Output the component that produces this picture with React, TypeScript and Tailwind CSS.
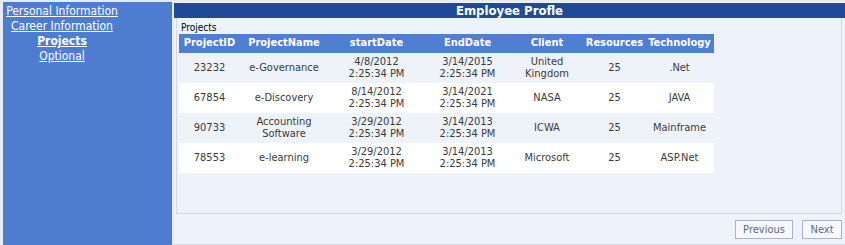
import React from "react";

const rows = [
  { id: "23232", name: ["e-Governance"], start: ["4/8/2012", "2:25:34 PM"], end: ["3/14/2015", "2:25:34 PM"], client: ["United", "Kingdom"], res: "25", tech: ".Net" },
  { id: "67854", name: ["e-Discovery"], start: ["8/14/2012", "2:25:34 PM"], end: ["3/14/2021", "2:25:34 PM"], client: ["NASA"], res: "25", tech: "JAVA" },
  { id: "90733", name: ["Accounting", "Software"], start: ["3/29/2012", "2:25:34 PM"], end: ["3/14/2013", "2:25:34 PM"], client: ["ICWA"], res: "25", tech: "Mainframe" },
  { id: "78553", name: ["e-learning"], start: ["3/29/2012", "2:25:34 PM"], end: ["3/14/2013", "2:25:34 PM"], client: ["Microsoft"], res: "25", tech: "ASP.Net" },
];

const cols = [
  { label: "ProjectID", w: "w-[61px]" },
  { label: "ProjectName", w: "w-[88px]" },
  { label: "startDate", w: "w-[97px]" },
  { label: "EndDate", w: "w-[85px]" },
  { label: "Client", w: "w-[74px]" },
  { label: "Resources", w: "w-[61px]" },
  { label: "Technology", w: "w-[69px]" },
];

const Lines = ({ lines }: { lines: string[] }) => (
  <div className="flex flex-col items-center leading-[12px]">
    {lines.map((l) => (
      <span key={l}>{l}</span>
    ))}
  </div>
);

export default function App() {
  return (
    <div className="w-[845px] h-[245px] bg-[#e9edf3] flex pt-[2px] pl-[3px] overflow-hidden font-['DejaVu_Sans_Condensed','DejaVu_Sans',sans-serif]">
      <aside className="w-[169px] h-full bg-[#4e7dd0] flex flex-col pt-[2px]">
        <nav className="w-[118px] flex flex-col items-center text-[12px] leading-[15px] text-white">
          <a className="underline">Personal Information</a>
          <a className="underline">Career Information</a>
          <a className="underline font-bold">Projects</a>
          <a className="underline">Optional</a>
        </nav>
      </aside>

      <main className="flex-1 ml-[2px] flex flex-col bg-[#eef2fa] border-b border-[#d5d9e0]">
        <header className="h-[15px] mt-[1px] bg-[#1d4b98] text-white text-[13px] font-bold leading-[15px] text-center">
          Employee Profle
        </header>

        <section className="ml-[2px] mr-[3px] h-[196px] border border-[#d3d9e3] border-t-0 flex flex-col">
          <p className="text-[10px] leading-[13px] text-black pl-[4px] pt-[3px]">Projects</p>
          <table className="ml-[2px] w-[535px] border-collapse text-[11px] text-[#3a3a3a]">
            <thead>
              <tr className="h-[19px] bg-[#4f7fd1] text-white">
                {cols.map((c) => (
                  <th key={c.label} className={`${c.w} font-bold text-center p-0`}>
                    {c.label}
                  </th>
                ))}
              </tr>
            </thead>
            <tbody>
              {rows.map((r, i) => (
                <tr key={r.id} className={`h-[30px] ${i % 2 === 0 ? "bg-[#eef2f9]" : "bg-white"}`}>
                  <td className="text-center p-0">{r.id}</td>
                  <td className="p-0"><Lines lines={r.name} /></td>
                  <td className="p-0"><Lines lines={r.start} /></td>
                  <td className="p-0"><Lines lines={r.end} /></td>
                  <td className="p-0"><Lines lines={r.client} /></td>
                  <td className="text-center p-0">{r.res}</td>
                  <td className="text-center p-0">{r.tech}</td>
                </tr>
              ))}
            </tbody>
          </table>
        </section>

        <footer className="flex justify-end gap-[9px] pr-[3px] pt-[6px] text-[11px] text-[#5b6b82]">
          <button className="w-[58px] h-[19px] border border-[#a9b3c2] bg-[#f6f8fc] leading-[17px]">Previous</button>
          <button className="w-[40px] h-[19px] border border-[#a9b3c2] bg-[#f6f8fc] leading-[17px]">Next</button>
        </footer>
      </main>
    </div>
  );
}
